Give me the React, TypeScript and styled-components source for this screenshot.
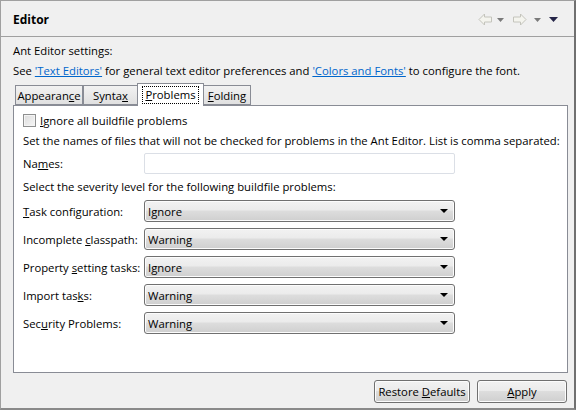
import React from "react";
import styled, { createGlobalStyle } from "styled-components";

const Global = createGlobalStyle`
  html, body { margin: 0; padding: 0; background: #f0f0f0; }
  body { font-family: "Open Sans", "Noto Sans", sans-serif; font-size: 11.3px; color: #000; }
  * { box-sizing: border-box; }
`;

const Window = styled.div`
  width: 576px;
  height: 410px;
  background: #f0f0f0;
  border-top: 1px solid #a0a0a0;
  border-left: 1px solid #a0a0a0;
  border-right: 2px solid #707070;
  border-bottom: 2px solid #8a8a8a;
  display: flex;
  flex-direction: column;
`;

const Header = styled.div`
  height: 36px;
  border-bottom: 1px solid #a0a0a0;
  display: flex;
  align-items: center;
  justify-content: space-between;
  padding: 0 12px 0 12px;
`;

const Title = styled.div`
  font-weight: bold;
  font-size: 12px;
  margin-top: 2px;
`;

const Nav = styled.div`
  display: flex;
  align-items: center;
  margin-top: 2px;
`;

const NavSlot = styled.span<{ $w: number }>`
  display: inline-flex;
  width: ${(p) => p.$w}px;
  justify-content: center;
  align-items: center;
`;

const Content = styled.div`
  flex: 1;
  display: flex;
  flex-direction: column;
  padding: 6px 7px 0 12px;
`;

const Line = styled.div<{ $mt?: number }>`
  height: 15px;
  line-height: 15px;
  white-space: nowrap;
  margin-top: ${(p) => p.$mt ?? 0}px;
`;

const Link = styled.a`
  color: #0066cc;
  text-decoration: underline;
  cursor: pointer;
`;

const TabStrip = styled.div`
  display: flex;
  align-items: flex-end;
  height: 22px;
  margin-top: 5px;
  padding-left: 2px;
  position: relative;
  z-index: 1;
`;

const Tab = styled.div<{ $active?: boolean; $w: number }>`
  width: ${(p) => p.$w}px;
  height: ${(p) => (p.$active ? 23 : 20)}px;
  margin-bottom: ${(p) => (p.$active ? -1 : 0)}px;
  margin-left: ${(p) => (p.$active ? -1 : 0)}px;
  margin-right: ${(p) => (p.$active ? -1 : 0)}px;
  border: 1px solid #898c95;
  border-bottom: ${(p) => (p.$active ? "none" : "1px solid #898c95")};
  background: ${(p) => (p.$active ? "#fff" : "linear-gradient(#f2f2f2, #e0e0e0)")};
  display: flex;
  align-items: center;
  justify-content: center;
  line-height: 15px;
  padding-top: ${(p) => (p.$active ? 0 : 1)}px;
`;

const Focus = styled.span`
  outline: 1px dotted #000;
  padding: 0 2px 1px;
`;

const Panel = styled.div`
  width: 555px;
  height: 268px;
  background: #fff;
  border: 1px solid #898c95;
  display: flex;
  flex-direction: column;
  padding: 7px 0 0 9px;
`;

const CheckRow = styled.label`
  display: flex;
  align-items: center;
  gap: 4px;
  height: 15px;
  line-height: 15px;
`;

const Box = styled.span`
  width: 13px;
  height: 13px;
  border: 1px solid #8e8f8f;
  background: linear-gradient(135deg, #dcdcdc, #f6f6f6);
  box-shadow: inset 0 0 0 1px #f4f4f4;
`;

const Form = styled.div<{ $mt: number }>`
  display: grid;
  grid-template-columns: 121px 311px;
  align-items: center;
  row-gap: 6px;
  margin-top: ${(p) => p.$mt}px;
`;

const Label = styled.div`
  line-height: 15px;
  white-space: nowrap;
`;

const TextInput = styled.div`
  height: 21px;
  border: 1px solid #dbdfe6;
  border-radius: 2px;
  background: #fff;
`;

const Select = styled.div`
  height: 22px;
  border: 1px solid #707070;
  border-radius: 3px;
  background: linear-gradient(#f2f2f2 0%, #ebebeb 45%, #dddddd 50%, #cfcfcf 100%);
  box-shadow: inset 0 0 0 1px #fcfcfc;
  display: flex;
  align-items: center;
  justify-content: space-between;
  padding: 0 6px 0 3px;
  line-height: 15px;
`;

const Arrow = styled.span`
  width: 0;
  height: 0;
  border-left: 4px solid transparent;
  border-right: 4px solid transparent;
  border-top: 4px solid #000;
`;

const Footer = styled.div`
  display: flex;
  justify-content: flex-end;
  gap: 7px;
  padding-top: 7px;
`;

const Button = styled.div<{ $w: number }>`
  width: ${(p) => p.$w}px;
  height: 23px;
  border: 1px solid #707070;
  border-radius: 3px;
  background: linear-gradient(#f2f2f2 0%, #ebebeb 45%, #dddddd 50%, #cfcfcf 100%);
  box-shadow: inset 0 0 0 1px #fcfcfc;
  display: flex;
  align-items: center;
  justify-content: center;
  line-height: 15px;
`;

const LeftArrow = () => (
  <svg width="15" height="13" viewBox="0 0 15 13">
    <path d="M1 6.5 L6.5 1 L6.5 4 L13.5 4 L13.5 9 L6.5 9 L6.5 12 Z" fill="#f4f4ee" stroke="#c4c4bc" strokeWidth="1" />
  </svg>
);
const RightArrow = () => (
  <svg width="15" height="13" viewBox="0 0 15 13">
    <path d="M14 6.5 L8.5 1 L8.5 4 L1.5 4 L1.5 9 L8.5 9 L8.5 12 Z" fill="#f4f4ee" stroke="#c4c4bc" strokeWidth="1" />
  </svg>
);
const SmallTri = ({ c = "#7a7a7a", w = 7, h = 4 }: { c?: string; w?: number; h?: number }) => (
  <svg width={w} height={h} viewBox={`0 0 ${w} ${h}`}>
    <path d={`M0 0 L${w} 0 L${w / 2} ${h} Z`} fill={c} />
  </svg>
);

const rows = [
  { pre: "", u: "T", post: "ask configuration:", v: "Ignore" },
  { pre: "Incomplete ", u: "c", post: "lasspath:", v: "Warning" },
  { pre: "Property ", u: "s", post: "etting tasks:", v: "Ignore" },
  { pre: "Import tas", u: "k", post: "s:", v: "Warning" },
  { pre: "Sec", u: "u", post: "rity Problems:", v: "Warning" },
];

export default function App() {
  return (
    <>
      <Global />
      <Window>
        <Header>
          <Title>Editor</Title>
          <Nav>
            <NavSlot $w={17}><LeftArrow /></NavSlot>
            <NavSlot $w={13}><SmallTri /></NavSlot>
            <NavSlot $w={24}><RightArrow /></NavSlot>
            <NavSlot $w={13}><SmallTri /></NavSlot>
            <NavSlot $w={18}><SmallTri c="#252548" w={9} h={5} /></NavSlot>
          </Nav>
        </Header>
        <Content>
          <Line>Ant Editor settings:</Line>
          <Line $mt={5}>
            See <Link>'Text Editors'</Link> for general text editor preferences and{" "}
            <Link>'Colors and Fonts'</Link> to configure the font.
          </Line>
          <TabStrip>
            <Tab $w={68}><span>Appearan<u>c</u>e</span></Tab>
            <Tab $w={55}><span>Synta<u>x</u></span></Tab>
            <Tab $w={67} $active>
              <Focus><u>P</u>roblems</Focus>
            </Tab>
            <Tab $w={48}><span><u>F</u>olding</span></Tab>
          </TabStrip>
          <Panel>
            <CheckRow>
              <Box />
              <span><u>I</u>gnore all buildfile problems</span>
            </CheckRow>
            <Line $mt={5}>
              Set the names of files that will not be checked for problems in the Ant Editor. List is comma separated:
            </Line>
            <Form $mt={5}>
              <Label>Na<u>m</u>es:</Label>
              <TextInput />
            </Form>
            <Line $mt={5}>Select the severity level for the following buildfile problems:</Line>
            <Form $mt={6}>
              {rows.map((r) => (
                <React.Fragment key={r.post}>
                  <Label>
                    {r.pre}
                    <u>{r.u}</u>
                    {r.post}
                  </Label>
                  <Select>
                    <span>{r.v}</span>
                    <Arrow />
                  </Select>
                </React.Fragment>
              ))}
            </Form>
          </Panel>
          <Footer>
            <Button $w={96}><span>Restore <u>D</u>efaults</span></Button>
            <Button $w={90}><span><u>A</u>pply</span></Button>
          </Footer>
        </Content>
      </Window>
    </>
  );
}
